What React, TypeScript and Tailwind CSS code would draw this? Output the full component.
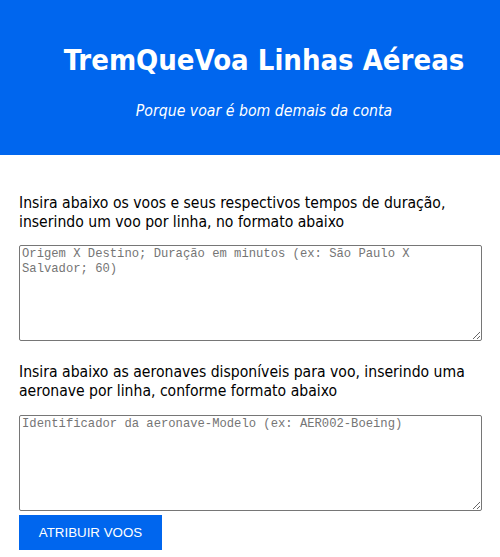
import React from "react";

const App = () => {
  return (
    <div className="w-[500px] min-h-[557px] bg-white font-['DejaVu_Sans_Condensed','DejaVu_Sans',sans-serif] text-black">
      <header className="h-[155px] bg-[#0066ee] pl-[28px] pt-[39px] text-center text-white">
        <h1 className="text-[29px] font-bold leading-[42px]">TremQueVoa Linhas Aéreas</h1>
        <p className="mt-[20px] text-[15.7px] italic leading-[19px]">Porque voar é bom demais da conta</p>
      </header>

      <main className="flex flex-col px-[19px] pt-[39px]">
        <p className="text-[15.6px] leading-[19px]">
          Insira abaixo os voos e seus respectivos tempos de duração, inserindo um voo por linha, no formato abaixo
        </p>
        <textarea
          className="mt-[13px] h-[96px] w-[463px] rounded-[2px] border border-[#767676] px-[2px] py-[1px] font-['Liberation_Mono',monospace] text-[12.2px] leading-[15px] placeholder:text-[#757575]"
          placeholder="Origem X Destino; Duração em minutos (ex: São Paulo X Salvador; 60)"
        />
        <p className="mt-[22px] text-[15.6px] leading-[19px]">
          Insira abaixo as aeronaves disponíveis para voo, inserindo uma aeronave por linha, conforme formato abaixo
        </p>
        <textarea
          className="mt-[14px] h-[96px] w-[463px] rounded-[2px] border border-[#767676] px-[2px] py-[1px] font-['Liberation_Mono',monospace] text-[12.2px] leading-[15px] placeholder:text-[#757575]"
          placeholder="Identificador da aeronave-Modelo (ex: AER002-Boeing)"
        />
        <div>
          <button className="mt-[4px] h-[35px] w-[143px] bg-[#0066ee] font-['Liberation_Sans',sans-serif] text-[13.33px] text-white">
            ATRIBUIR VOOS
          </button>
        </div>
      </main>
    </div>
  );
};

export default App;
